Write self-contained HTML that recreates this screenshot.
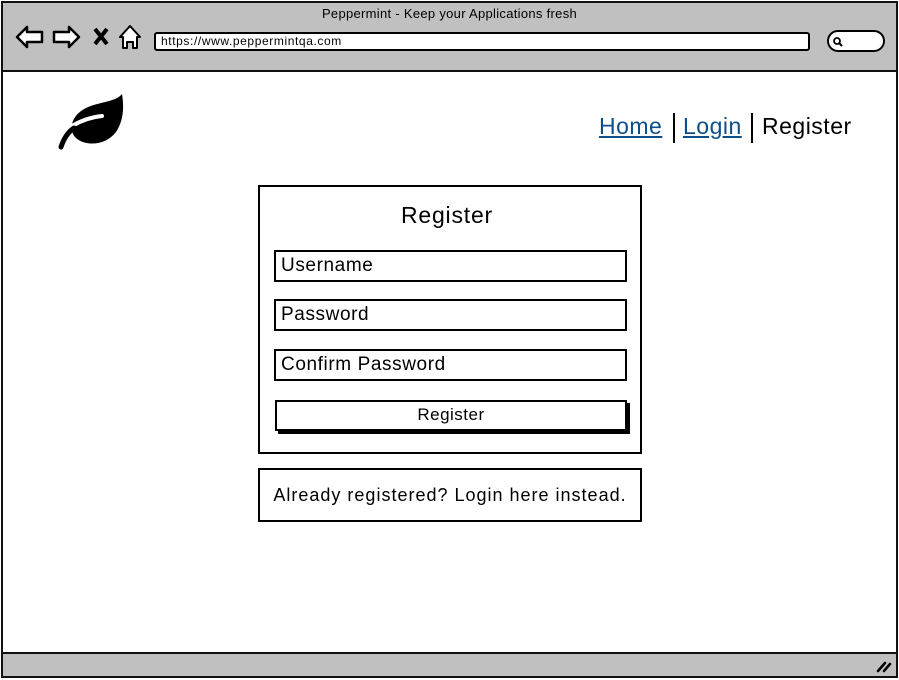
<!DOCTYPE html>
<html><head><meta charset="utf-8"><style>
*{margin:0;padding:0;box-sizing:border-box}
body{width:899px;height:680px;background:#fff;position:relative;overflow:hidden;font-family:"Liberation Sans",sans-serif;color:#000}
.a{position:absolute}
.box{position:absolute;border:2px solid #000;background:#fff}
.in{font-size:19px;padding-left:5px;line-height:27px;letter-spacing:0.6px}
</style></head><body>
<div class="a" style="left:1px;top:1px;width:897px;height:677px;border:2px solid #111;"></div>
<div class="a" style="left:3px;top:3px;width:893px;height:69px;background:#c0c0c0;border-bottom:2px solid #111"></div>
<div class="a" style="left:3px;top:652px;width:893px;height:24px;background:#c0c0c0;border-top:2px solid #111"></div>
<div class="a" style="left:0;top:6px;width:899px;text-align:center;font-size:13px;letter-spacing:0.3px">Peppermint - Keep your Applications fresh</div>
<svg class="a" style="left:14px;top:22px" width="132" height="30" viewBox="0 0 132 30">
<path d="M3 15 L13 5 L13 10 L28 10 L28 20 L13 20 L13 25 Z" fill="#fff" stroke="#000" stroke-width="2.5" stroke-linejoin="round"/>
<path d="M65 15 L55 5 L55 10 L40 10 L40 20 L55 20 L55 25 Z" fill="#fff" stroke="#000" stroke-width="2.5" stroke-linejoin="round"/>
<path d="M81 7 L93 22 M93 7 L81 22" stroke="#000" stroke-width="4"/>
<path d="M116 4 L106 15 L109 15 L109 26 L113 26 L113 20 L119 20 L119 26 L123 26 L123 15 L126 15 Z" fill="#fff" stroke="#000" stroke-width="2" stroke-linejoin="round"/>
</svg>
<div class="a" style="left:154px;top:32px;width:656px;height:19px;background:#fff;border:2px solid #000;border-radius:3px;font-size:12px;padding-left:5px;line-height:15px;letter-spacing:0.6px">https://www.peppermintqa.com</div>
<div class="a" style="left:827px;top:30px;width:58px;height:22px;background:#fff;border:2px solid #000;border-radius:11px"></div>
<svg class="a" style="left:832px;top:36px" width="12" height="12"><circle cx="5" cy="5" r="3" fill="none" stroke="#000" stroke-width="1.8"/><path d="M7 7 L10 10" stroke="#000" stroke-width="2"/></svg>
<svg class="a" style="left:56px;top:92px" width="70" height="60" viewBox="0 0 70 60">
<path d="M66 2 C60 10 42 10 30 16 C18 22 13 33 17 42 C23 54 48 56 60 40 C68 28 68 14 66 2 Z" fill="#000"/>
<path d="M16 34 C26 28 36 25 46 24" stroke="#fff" stroke-width="4" fill="none" stroke-linecap="round"/>
<path d="M5 55 C8 46 12 40 18 36" stroke="#000" stroke-width="5" fill="none" stroke-linecap="round"/>
</svg>
<div class="a" style="left:599px;top:113px;font-size:23px;letter-spacing:0.5px;color:#0d4f8b;text-decoration:underline">Home</div>
<div class="a" style="left:673px;top:113px;width:2px;height:30px;background:#000"></div>
<div class="a" style="left:683px;top:113px;font-size:23px;letter-spacing:0.5px;color:#0d4f8b;text-decoration:underline">Login</div>
<div class="a" style="left:751px;top:113px;width:2px;height:30px;background:#000"></div>
<div class="a" style="left:762px;top:113px;font-size:23px;letter-spacing:0.5px">Register</div>
<div class="box" style="left:258px;top:185px;width:384px;height:269px"></div>
<div class="a" style="left:258px;top:202px;width:384px;text-align:center;font-size:23px;letter-spacing:0.8px;padding-right:6px">Register</div>
<div class="box in" style="left:274px;top:250px;width:353px;height:32px">Username</div>
<div class="box in" style="left:274px;top:299px;width:353px;height:32px">Password</div>
<div class="box in" style="left:274px;top:349px;width:353px;height:32px">Confirm Password</div>
<div class="box" style="left:275px;top:400px;width:352px;height:31px;font-size:17px;letter-spacing:0.5px;text-align:center;line-height:26px;box-shadow:3px 3px 0 #000">Register</div>
<div class="box" style="left:258px;top:468px;width:384px;height:54px;font-size:18px;letter-spacing:1px;text-align:center;line-height:51px">Already registered? Login here instead.</div>
<svg class="a" style="left:876px;top:659px" width="16" height="14"><path d="M2 12 L9 4 M8 12 L14 5" stroke="#000" stroke-width="2.5" stroke-linecap="round"/></svg>
</body></html>
